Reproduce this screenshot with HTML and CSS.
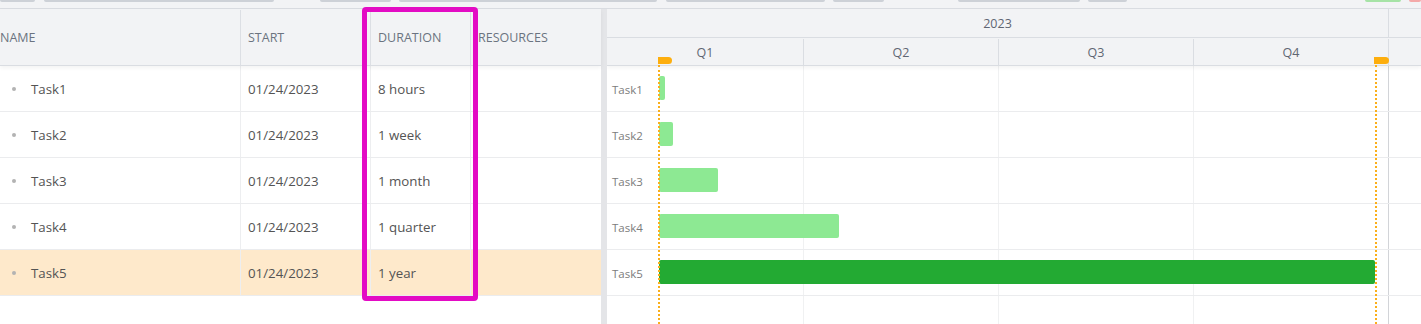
FILE: index.html
```html
<!DOCTYPE html>
<html lang="en">
<head>
  <meta charset="UTF-8">
  <title>Gantt - Duration Column</title>
  <link rel="stylesheet" href="styles.css">
</head>
<body>
  <!-- cropped toolbar above the gantt -->
  <div class="toolbar">
    <span class="tb"></span>
    <span class="tb"></span>
    <span class="tb"></span>
    <span class="tb"></span>
    <span class="tb"></span>
    <span class="tb"></span>
    <span class="tb"></span>
    <span class="tb"></span>
    <span class="tb tb-ok"></span>
    <span class="tb tb-cancel"></span>
  </div>

  <div class="gantt">
    <!-- Left grid -->
    <div class="grid">
      <div class="grid-row grid-head">
        <div class="cell col-name">NAME</div>
        <div class="cell col-start">START</div>
        <div class="cell col-duration">DURATION</div>
        <div class="cell col-resources">RESOURCES</div>
      </div>
      <div class="grid-row">
        <div class="cell col-name"><span class="dot"></span>Task1</div>
        <div class="cell col-start">01/24/2023</div>
        <div class="cell col-duration">8 hours</div>
        <div class="cell col-resources"></div>
      </div>
      <div class="grid-row">
        <div class="cell col-name"><span class="dot"></span>Task2</div>
        <div class="cell col-start">01/24/2023</div>
        <div class="cell col-duration">1 week</div>
        <div class="cell col-resources"></div>
      </div>
      <div class="grid-row">
        <div class="cell col-name"><span class="dot"></span>Task3</div>
        <div class="cell col-start">01/24/2023</div>
        <div class="cell col-duration">1 month</div>
        <div class="cell col-resources"></div>
      </div>
      <div class="grid-row">
        <div class="cell col-name"><span class="dot"></span>Task4</div>
        <div class="cell col-start">01/24/2023</div>
        <div class="cell col-duration">1 quarter</div>
        <div class="cell col-resources"></div>
      </div>
      <div class="grid-row selected">
        <div class="cell col-name"><span class="dot"></span>Task5</div>
        <div class="cell col-start">01/24/2023</div>
        <div class="cell col-duration">1 year</div>
        <div class="cell col-resources"></div>
      </div>
    </div>

    <div class="splitter"></div>

    <!-- Timeline -->
    <div class="chart">
      <div class="chart-head">
        <div class="year-row">
          <div class="scale-cell">2023</div>
          <div class="scale-cell"></div>
        </div>
        <div class="quarter-row">
          <div class="scale-cell">Q1</div>
          <div class="scale-cell">Q2</div>
          <div class="scale-cell">Q3</div>
          <div class="scale-cell">Q4</div>
          <div class="scale-cell"></div>
        </div>
      </div>

      <div class="chart-body">
        <div class="chart-cols">
          <div></div><div></div><div></div><div class="year-end"></div><div></div>
        </div>
        <div class="chart-row"><span class="bar-label">Task1</span><span class="bar" style="width:6px"></span></div>
        <div class="chart-row"><span class="bar-label">Task2</span><span class="bar" style="width:14px"></span></div>
        <div class="chart-row"><span class="bar-label">Task3</span><span class="bar" style="width:59px"></span></div>
        <div class="chart-row"><span class="bar-label">Task4</span><span class="bar" style="width:180px"></span></div>
        <div class="chart-row"><span class="bar-label">Task5</span><span class="bar bar-selected" style="width:716px"></span></div>
      </div>

      <!-- project start / end markers -->
      <div class="marker marker-start"><span class="flag"></span></div>
      <div class="marker marker-end"><span class="flag"></span></div>
    </div>
  </div>

  <div class="focus-box"></div>
</body>
</html>
```

FILE: styles.css
```css
body {
  font-family: 'Open Sans', 'Noto Sans', sans-serif;
  font-size: 13.3px;
  color: #545454;
  background-color: #FFFFFF;
  margin: 0;
  height: 324px;
  overflow: hidden;
  position: relative;
}

/* Toolbar (only its lower edge is visible) */
.toolbar {
  display: flex;
  height: 8px;
  background-color: #F2F3F5;
  border-bottom: 1px solid #D9DCE1;
}

.tb {
  height: 2px;
  background-color: #CDD1D7;
  border-radius: 0 0 2px 2px;
}

.tb:nth-child(1) { width: 35px; }
.tb:nth-child(2) { width: 230px; margin-left: 9px; }
.tb:nth-child(3) { width: 71px; margin-left: 46px; }
.tb:nth-child(4) { width: 258px; margin-left: 8px; }
.tb:nth-child(5) { width: 159px; margin-left: 9px; }
.tb:nth-child(6) { width: 51px; margin-left: 8px; }
.tb:nth-child(7) { width: 122px; margin-left: 74px; }
.tb:nth-child(8) { width: 39px; margin-left: 8px; }

.tb-ok {
  width: 36px;
  margin-left: 238px;
  background-color: #A6E3A6;
}

.tb-cancel {
  width: 12px;
  margin-left: 8px;
  background-color: #F4A9A9;
}

/* Gantt layout */
.gantt {
  display: flex;
  height: 315px;
}

.grid {
  width: 601px;
  flex-shrink: 0;
}

.grid-row {
  display: flex;
  height: 46px;
  border-bottom: 1px solid #EBECEE;
  box-sizing: border-box;
}

.cell {
  display: flex;
  align-items: center;
  padding-left: 7px;
  box-sizing: border-box;
  border-right: 1px solid #EDEEF0;
  white-space: nowrap;
  overflow: hidden;
}

.col-name { width: 241px; padding-left: 12px; }
.col-start { width: 130px; }
.col-duration { width: 100px; }
.col-resources { width: 130px; border-right: none; }

.dot {
  width: 4px;
  height: 4px;
  border-radius: 50%;
  background-color: #B3B3B3;
  margin-right: 15px;
}

.grid-head {
  height: 57px;
  padding-top: 1px;
  background-color: #F2F3F5;
  border-bottom: 1px solid #DADDE2;
  color: #6B7380;
  font-size: 12.5px;
  box-shadow: 0 2px 4px rgba(0, 0, 0, 0.05);
  position: relative;
}

.grid-head .cell {
  border-right-color: #DCDFE4;
}

.grid-head .col-name {
  padding-left: 0;
}

.selected {
  background-color: #FEE9CB;
}

.splitter {
  width: 6px;
  flex-shrink: 0;
  background-color: #E4E5E8;
}

/* Timeline */
.chart {
  flex: 1;
  position: relative;
  overflow: hidden;
}

.chart-head {
  background-color: #F2F3F5;
  color: #5F6672;
  font-size: 12.5px;
  border-bottom: 1px solid #DADDE2;
  box-shadow: 0 2px 4px rgba(0, 0, 0, 0.05);
  position: relative;
  z-index: 1;
}

.year-row,
.quarter-row {
  display: grid;
  height: 28px;
}

.year-row {
  grid-template-columns: 782px 1fr;
  border-bottom: 1px solid #DADDE2;
}

.quarter-row {
  height: 27px;
  padding-top: 1px;
  box-sizing: border-box;
  grid-template-columns: 197px 195px 195px 195px 1fr;
}

.scale-cell {
  display: flex;
  align-items: center;
  justify-content: center;
  border-right: 1px solid #DADDE2;
}

.scale-cell:last-child {
  border-right: none;
}

.chart-body {
  position: relative;
  height: 258px;
}

.chart-cols {
  position: absolute;
  inset: 0;
  display: grid;
  grid-template-columns: 197px 195px 195px 195px 1fr;
}

.chart-cols div {
  border-right: 1px solid #F0F1F2;
}

.chart-cols .year-end {
  border-right-color: #D2D4D8;
}

.chart-cols div:last-child {
  border-right: none;
}

.chart-row {
  position: relative;
  display: flex;
  align-items: center;
  height: 46px;
  border-bottom: 1px solid #EBECEE;
  box-sizing: border-box;
}

.bar-label {
  padding-left: 5px;
  padding-top: 1px;
  font-size: 11.5px;
  color: #7C7C7C;
}

.bar {
  position: absolute;
  left: 52px;
  top: 10px;
  height: 24px;
  background-color: #8DE993;
  border-radius: 2px;
}

.bar-selected {
  background-color: #23AA33;
}

.marker {
  position: absolute;
  top: 56px;
  bottom: 0;
  width: 0;
  border-left: 2px dotted #FBAF1A;
  z-index: 2;
}

.marker-start { left: 51px; }
.marker-end { left: 768px; }

.flag {
  position: absolute;
  top: -8px;
  left: -2px;
  width: 14px;
  height: 7px;
  background-color: #FDAE0E;
  border-radius: 0 4px 4px 0;
}

.marker-end .flag {
  left: -3px;
  width: 15px;
}

/* Highlight around the DURATION column */
.focus-box {
  position: absolute;
  left: 362px;
  top: 7px;
  width: 116px;
  height: 294px;
  border: 5px solid #E30BC4;
  border-radius: 4px;
  box-sizing: border-box;
}
```
